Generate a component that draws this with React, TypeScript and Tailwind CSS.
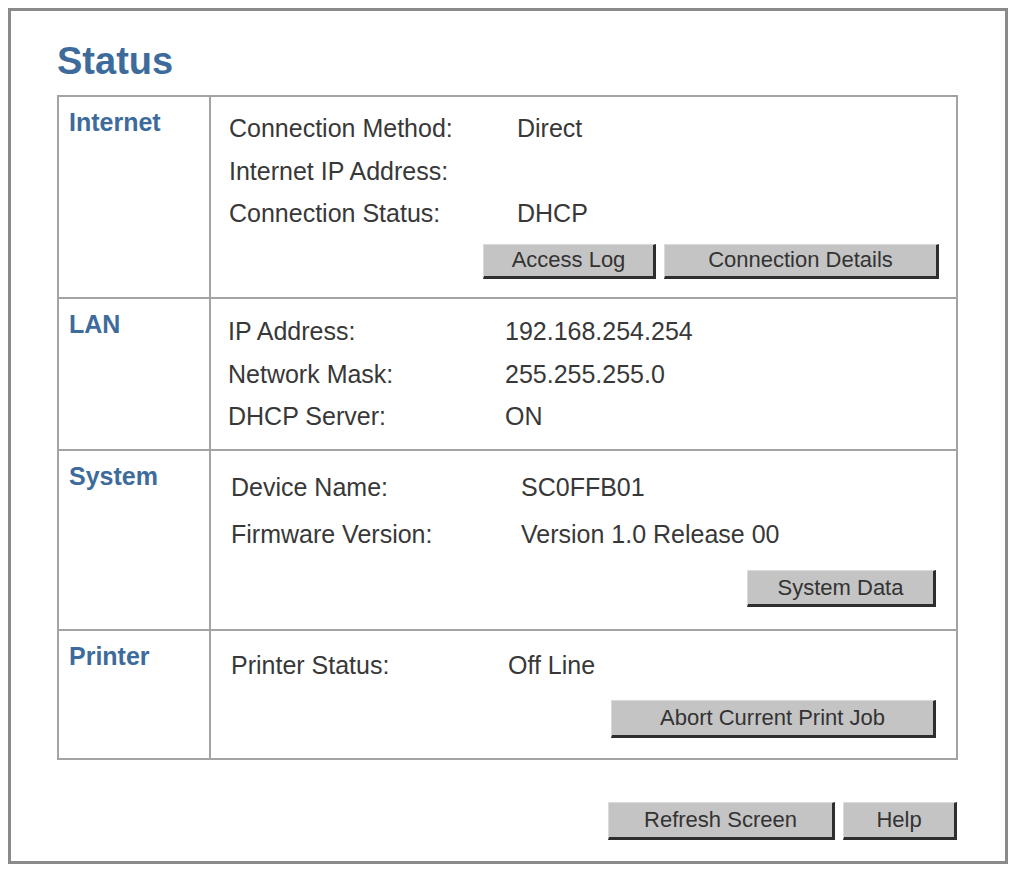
const font = { fontFamily: '"Liberation Sans", Arial, sans-serif' };

type Row = { label: string; value?: string };

function Btn({ children, className }: { children: React.ReactNode; className: string }) {
  return (
    <button
      className={`bg-[#c4c4c4] text-[#333] text-[22px] leading-none border-t border-l border-t-[#dadada] border-l-[#dadada] border-r-[3px] border-b-[3px] border-r-[#2e2e2e] border-b-[#2e2e2e] flex items-center justify-center ${className}`}
    >
      {children}
    </button>
  );
}

function Lines({ rows, labelW, lead }: { rows: Row[]; labelW: string; lead: string }) {
  return (
    <div className={`text-[25px] text-[#383838] ${lead}`}>
      {rows.map((r) => (
        <div key={r.label} className="flex">
          <span className={`${labelW} shrink-0`}>{r.label}</span>
          <span>{r.value}</span>
        </div>
      ))}
    </div>
  );
}

function Section({
  title,
  height,
  children,
  first,
}: {
  title: string;
  height: string;
  children: React.ReactNode;
  first?: boolean;
}) {
  return (
    <div className={`flex ${height} ${first ? "" : "border-t-2 border-[#a3a3a3]"}`}>
      <div className="w-[152px] shrink-0 border-r-2 border-[#a3a3a3] pl-[10px] pt-[13px]">
        <div className="text-[25px] font-bold leading-none text-[#3d6b9b]">{title}</div>
      </div>
      <div className="flex-1 flex flex-col">{children}</div>
    </div>
  );
}

export default function App() {
  return (
    <div className="bg-white w-[1012px] h-[871px] pt-2 pl-2" style={font}>
      <div className="w-[1000px] h-[856px] border-[3px] border-[#8a8a8a] pl-[46px] pt-[31px]">
        <h1 className="text-[38px] font-bold leading-none text-[#3d6b9b]">Status</h1>

        <div className="mt-[15px] w-[901px] border-2 border-[#a3a3a3]">
          <Section title="Internet" height="h-[200px]" first>
            <div className="pl-[18px] pt-[10px]">
              <Lines
                labelW="w-[288px]"
                lead="leading-[42.5px]"
                rows={[
                  { label: "Connection Method:", value: "Direct" },
                  { label: "Internet IP Address:" },
                  { label: "Connection Status:", value: "DHCP" },
                ]}
              />
            </div>
            <div className="flex justify-end gap-[8px] pr-[17px] mt-[9px]">
              <Btn className="w-[173px] h-[35px]">Access Log</Btn>
              <Btn className="w-[275px] h-[35px]">Connection Details</Btn>
            </div>
          </Section>

          <Section title="LAN" height="h-[152px]">
            <div className="pl-[17px] pt-[11px]">
              <Lines
                labelW="w-[277px]"
                lead="leading-[42.5px]"
                rows={[
                  { label: "IP Address:", value: "192.168.254.254" },
                  { label: "Network Mask:", value: "255.255.255.0" },
                  { label: "DHCP Server:", value: "ON" },
                ]}
              />
            </div>
          </Section>

          <Section title="System" height="h-[180px]">
            <div className="pl-[20px] pt-[13px]">
              <Lines
                labelW="w-[290px]"
                lead="leading-[47px]"
                rows={[
                  { label: "Device Name:", value: "SC0FFB01" },
                  { label: "Firmware Version:", value: "Version 1.0 Release 00" },
                ]}
              />
            </div>
            <div className="flex justify-end pr-[20px] mt-[12px]">
              <Btn className="w-[189px] h-[37px]">System Data</Btn>
            </div>
          </Section>

          <Section title="Printer" height="h-[129px]">
            <div className="pl-[20px] pt-[13px]">
              <Lines
                labelW="w-[277px]"
                lead="leading-[42px]"
                rows={[{ label: "Printer Status:", value: "Off Line" }]}
              />
            </div>
            <div className="flex justify-end pr-[20px] mt-[14px]">
              <Btn className="w-[325px] h-[38px]">Abort Current Print Job</Btn>
            </div>
          </Section>
        </div>

        <div className="w-[901px] flex justify-end gap-[8px] mt-[42px] pr-[1px]">
          <Btn className="w-[227px] h-[38px]">Refresh Screen</Btn>
          <Btn className="w-[114px] h-[38px]">Help</Btn>
        </div>
      </div>
    </div>
  );
}
